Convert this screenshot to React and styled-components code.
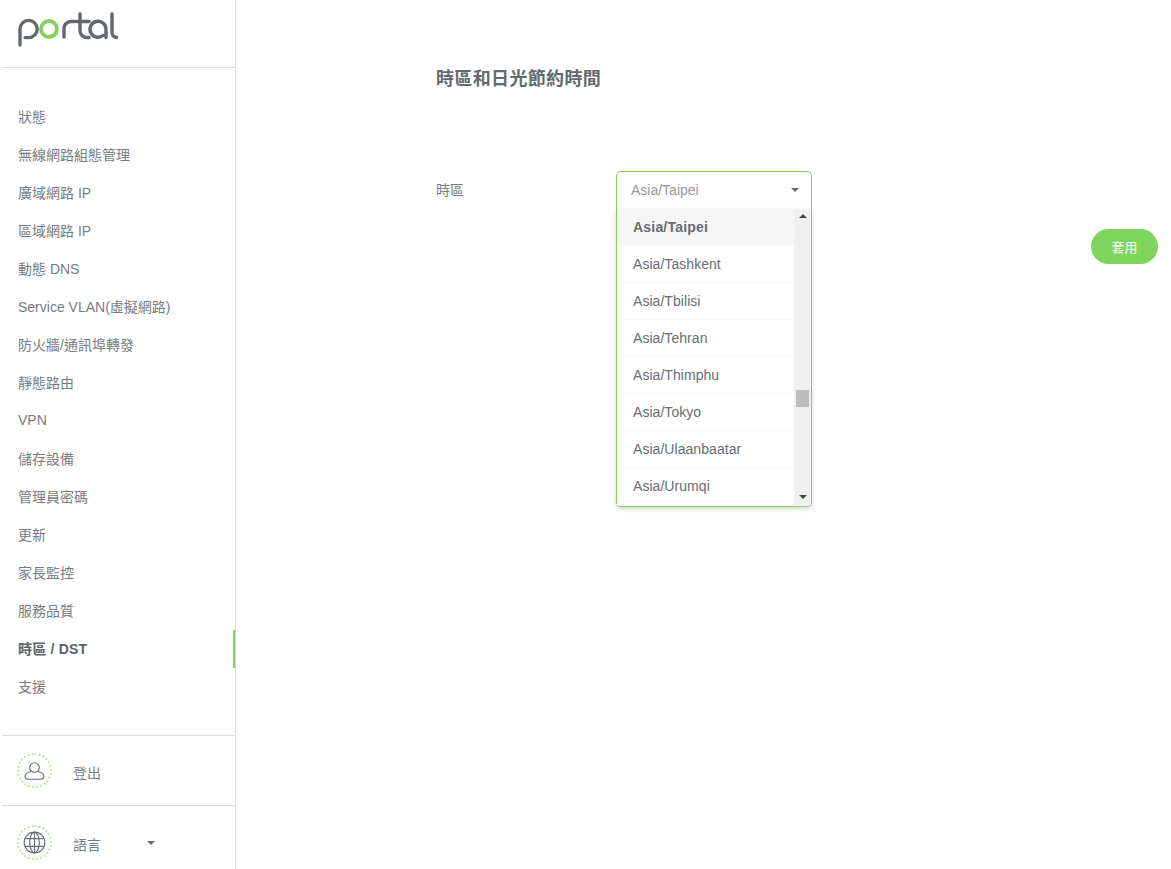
import React from "react";
import styled, { createGlobalStyle } from "styled-components";

const GlobalStyle = createGlobalStyle`
  html, body {
    margin: 0;
    padding: 0;
    background: #fff;
  }
  body {
    font-family: "Liberation Sans", "Noto Sans CJK TC", Arial, sans-serif;
    font-size: 14px;
    color: #666d73;
  }
  * {
    box-sizing: border-box;
  }
`;

const Page = styled.div`
  display: flex;
  width: 1171px;
  height: 869px;
  overflow: hidden;
`;
const Sidebar = styled.aside`
  width: 236px;
  height: 869px;
  flex-shrink: 0;
  display: flex;
  flex-direction: column;
  border-right: 1px solid #dcdcdc;
`;
const LogoBox = styled.div`
  height: 68px;
  margin-left: 2px;
  padding: 11px 0 0 14px;
  border-bottom: 1px solid #dcdcdc;
`;
const Nav = styled.nav`
  flex: 1;
  padding-top: 30px;
`;
const NavItem = styled.div`
  height: 38px;
  padding: 0 0 2px 18px;
  display: flex;
  align-items: center;
  font-size: 14px;
  color: ${(props) => (props.$active ? "#5b6268" : "#777c81")};
  font-weight: ${(props) => (props.$active ? 700 : 400)};
  letter-spacing: ${(props) => (props.$active ? "0.2px" : "0")};
  border-right: ${(props) => (props.$active ? "2px solid #85d160" : "none")};
`;
const FooterRow = styled.div`
  height: ${(props) => props.$height}px;
  margin-left: 2px;
  padding: ${(props) => props.$offset}px 0 0 15px;
  display: flex;
  align-items: center;
  border-top: 1px solid #dcdcdc;
`;
const IconRing = styled.div`
  width: 35px;
  height: 35px;
  border-radius: 50%;
  border: 2px dotted #bde5a9;
  display: flex;
  align-items: center;
  justify-content: center;
  color: #666d73;
`;
const FooterLabel = styled.span`
  margin-left: 21px;
  padding-top: 3px;
  font-size: 14px;
  color: #777c81;
`;
const SmallCaret = styled.span`
  width: 0;
  height: 0;
  border-left: 4px solid transparent;
  border-right: 4px solid transparent;
  border-top: 4px solid #666d73;
`;
const LangCaret = styled(SmallCaret)`
  margin: 2px 0 0 46px;
`;
const Main = styled.main`
  flex: 1;
  padding: 69px 13px 0 200px;
  display: flex;
  flex-direction: column;
`;
const Title = styled.h1`
  margin: 0;
  height: 20px;
  line-height: 20px;
  font-size: 18px;
  letter-spacing: 0.35px;
  font-weight: 700;
  color: #626a70;
`;
const FieldRow = styled.div`
  display: flex;
  align-items: center;
  margin-top: 82px;
`;
const FieldLabel = styled.label`
  width: 180px;
  padding-bottom: 2px;
  font-size: 14px;
  color: #777c81;
`;
const SelectWrap = styled.div`
  position: relative;
  width: 196px;
`;
const SelectBox = styled.div`
  height: 38px;
  padding: 0 12px 2px 14px;
  display: flex;
  align-items: center;
  justify-content: space-between;
  border: 1px solid #85d160;
  border-bottom: none;
  border-radius: 5px 5px 0 0;
  color: #999;
  font-size: 14px;
`;
const Menu = styled.div`
  position: absolute;
  top: 38px;
  left: 0;
  width: 196px;
  height: 298px;
  display: flex;
  background: #fff;
  border: 1px solid #85d160;
  border-top: none;
  border-radius: 0 0 5px 5px;
  box-shadow: 0 2px 5px rgba(0, 0, 0, 0.16);
`;
const Options = styled.ul`
  flex: 1;
  margin: 0;
  padding: 0;
  list-style: none;
`;
const Option = styled.li`
  height: 37px;
  padding-left: 16px;
  display: flex;
  align-items: center;
  font-size: 14px;
  color: #666d73;
  font-weight: ${(props) => (props.$selected ? 700 : 400)};
  letter-spacing: ${(props) => (props.$selected ? "0.2px" : "0.05px")};
  background: ${(props) => (props.$selected ? "#f6f6f6" : "#fff")};
  border-bottom: 1px solid #f8f8f8;
`;
const Scrollbar = styled.div`
  width: 17px;
  height: 296px;
  flex-shrink: 0;
  display: flex;
  flex-direction: column;
  align-items: center;
  background: #f1f0f0;
`;
const ScrollArrow = styled.span`
  width: 0;
  height: 0;
  margin-top: ${(props) => props.$top}px;
  border-left: 4px solid transparent;
  border-right: 4px solid transparent;
  border-top: ${(props) => (props.$down ? "4px solid #444" : "none")};
  border-bottom: ${(props) => (props.$down ? "none" : "4px solid #444")};
`;
const ScrollThumb = styled.div`
  width: 13px;
  height: 17px;
  margin-top: 172px;
  background: #bdbbbb;
`;
const Actions = styled.div`
  display: flex;
  justify-content: flex-end;
  margin-top: 20px;
`;
const ApplyButton = styled.button`
  width: 67px;
  height: 35px;
  border: none;
  border-radius: 18px;
  background: #7fd45c;
  color: #fff;
  font-family: inherit;
  font-size: 13px;
`;

const navItems = [
  "狀態",
  "無線網路組態管理",
  "廣域網路 IP",
  "區域網路 IP",
  "動態 DNS",
  "Service VLAN(虛擬網路)",
  "防火牆/通訊埠轉發",
  "靜態路由",
  "VPN",
  "儲存設備",
  "管理員密碼",
  "更新",
  "家長監控",
  "服務品質",
  "時區 / DST",
  "支援",
];

const zones = [
  "Asia/Taipei",
  "Asia/Tashkent",
  "Asia/Tbilisi",
  "Asia/Tehran",
  "Asia/Thimphu",
  "Asia/Tokyo",
  "Asia/Ulaanbaatar",
  "Asia/Urumqi",
];

const Logo = () => (
  <svg width="104" height="36" viewBox="0 0 104 36" fill="none" strokeWidth="3.4" strokeLinecap="round">
    <g stroke="#63686d">
      <path d="M4 34V18a8.600 8.600 0 1 1 8.600 8.600H9" />
      <path d="M48 26V17.500a7 7 0 0 1 7-7h3" />
      <path d="M64 3v16.500a7 7 0 0 0 7 7h2" />
      <path d="M60 10.500h13" />
      <path d="M90 26.500v-8.500a8 8 0 1 0-3 6.500" />
      <path d="M96 3v18.500a5 5 0 0 0 4.500 5" />
    </g>
    <circle cx="33" cy="18" r="8" stroke="#85d160" strokeWidth="3.8" />
  </svg>
);

const UserIcon = () => (
  <svg width="21" height="18" viewBox="0 0 21 18" fill="none" stroke="currentColor" strokeWidth="1.100">
    <circle cx="10.500" cy="5.500" r="4.800" />
    <path d="M7 9.500C3.500 10.500 1 12 1 14.300c0 2 1.800 3 4 3h11c2.200 0 4-1 4-3 0-2.300-2.500-3.800-6-4.800" />
  </svg>
);

const GlobeIcon = () => (
  <svg width="23" height="23" viewBox="0 0 24 24" fill="none" stroke="currentColor" strokeWidth="1.200">
    <circle cx="12" cy="12" r="10.800" />
    <ellipse cx="12" cy="12" rx="5" ry="10.800" />
    <path d="M12 1.200v21.600M2.400 8h19.200M2.400 16h19.200" />
  </svg>
);

const App = () => {
  return (
    <Page>
      <GlobalStyle />
      <Sidebar>
        <LogoBox>
          <Logo />
        </LogoBox>
        <Nav>
          {navItems.map((item) => (
            <NavItem key={item} $active={item === "時區 / DST"}>
              {item}
            </NavItem>
          ))}
        </Nav>
        <FooterRow $height={70} $offset={0}>
          <IconRing>
            <UserIcon />
          </IconRing>
          <FooterLabel>登出</FooterLabel>
        </FooterRow>
        <FooterRow $height={64} $offset={9}>
          <IconRing>
            <GlobeIcon />
          </IconRing>
          <FooterLabel>語言</FooterLabel>
          <LangCaret />
        </FooterRow>
      </Sidebar>
      <Main>
        <Title>時區和日光節約時間</Title>
        <FieldRow>
          <FieldLabel>時區</FieldLabel>
          <SelectWrap>
            <SelectBox>
              Asia/Taipei
              <SmallCaret />
            </SelectBox>
            <Menu>
              <Options>
                {zones.map((zone, i) => (
                  <Option key={zone} $selected={i === 0}>
                    {zone}
                  </Option>
                ))}
              </Options>
              <Scrollbar>
                <ScrollArrow $top={5} />
                <ScrollThumb />
                <ScrollArrow $down $top={88} />
              </Scrollbar>
            </Menu>
          </SelectWrap>
        </FieldRow>
        <Actions>
          <ApplyButton>套用</ApplyButton>
        </Actions>
      </Main>
    </Page>
  );
};

export default App;
